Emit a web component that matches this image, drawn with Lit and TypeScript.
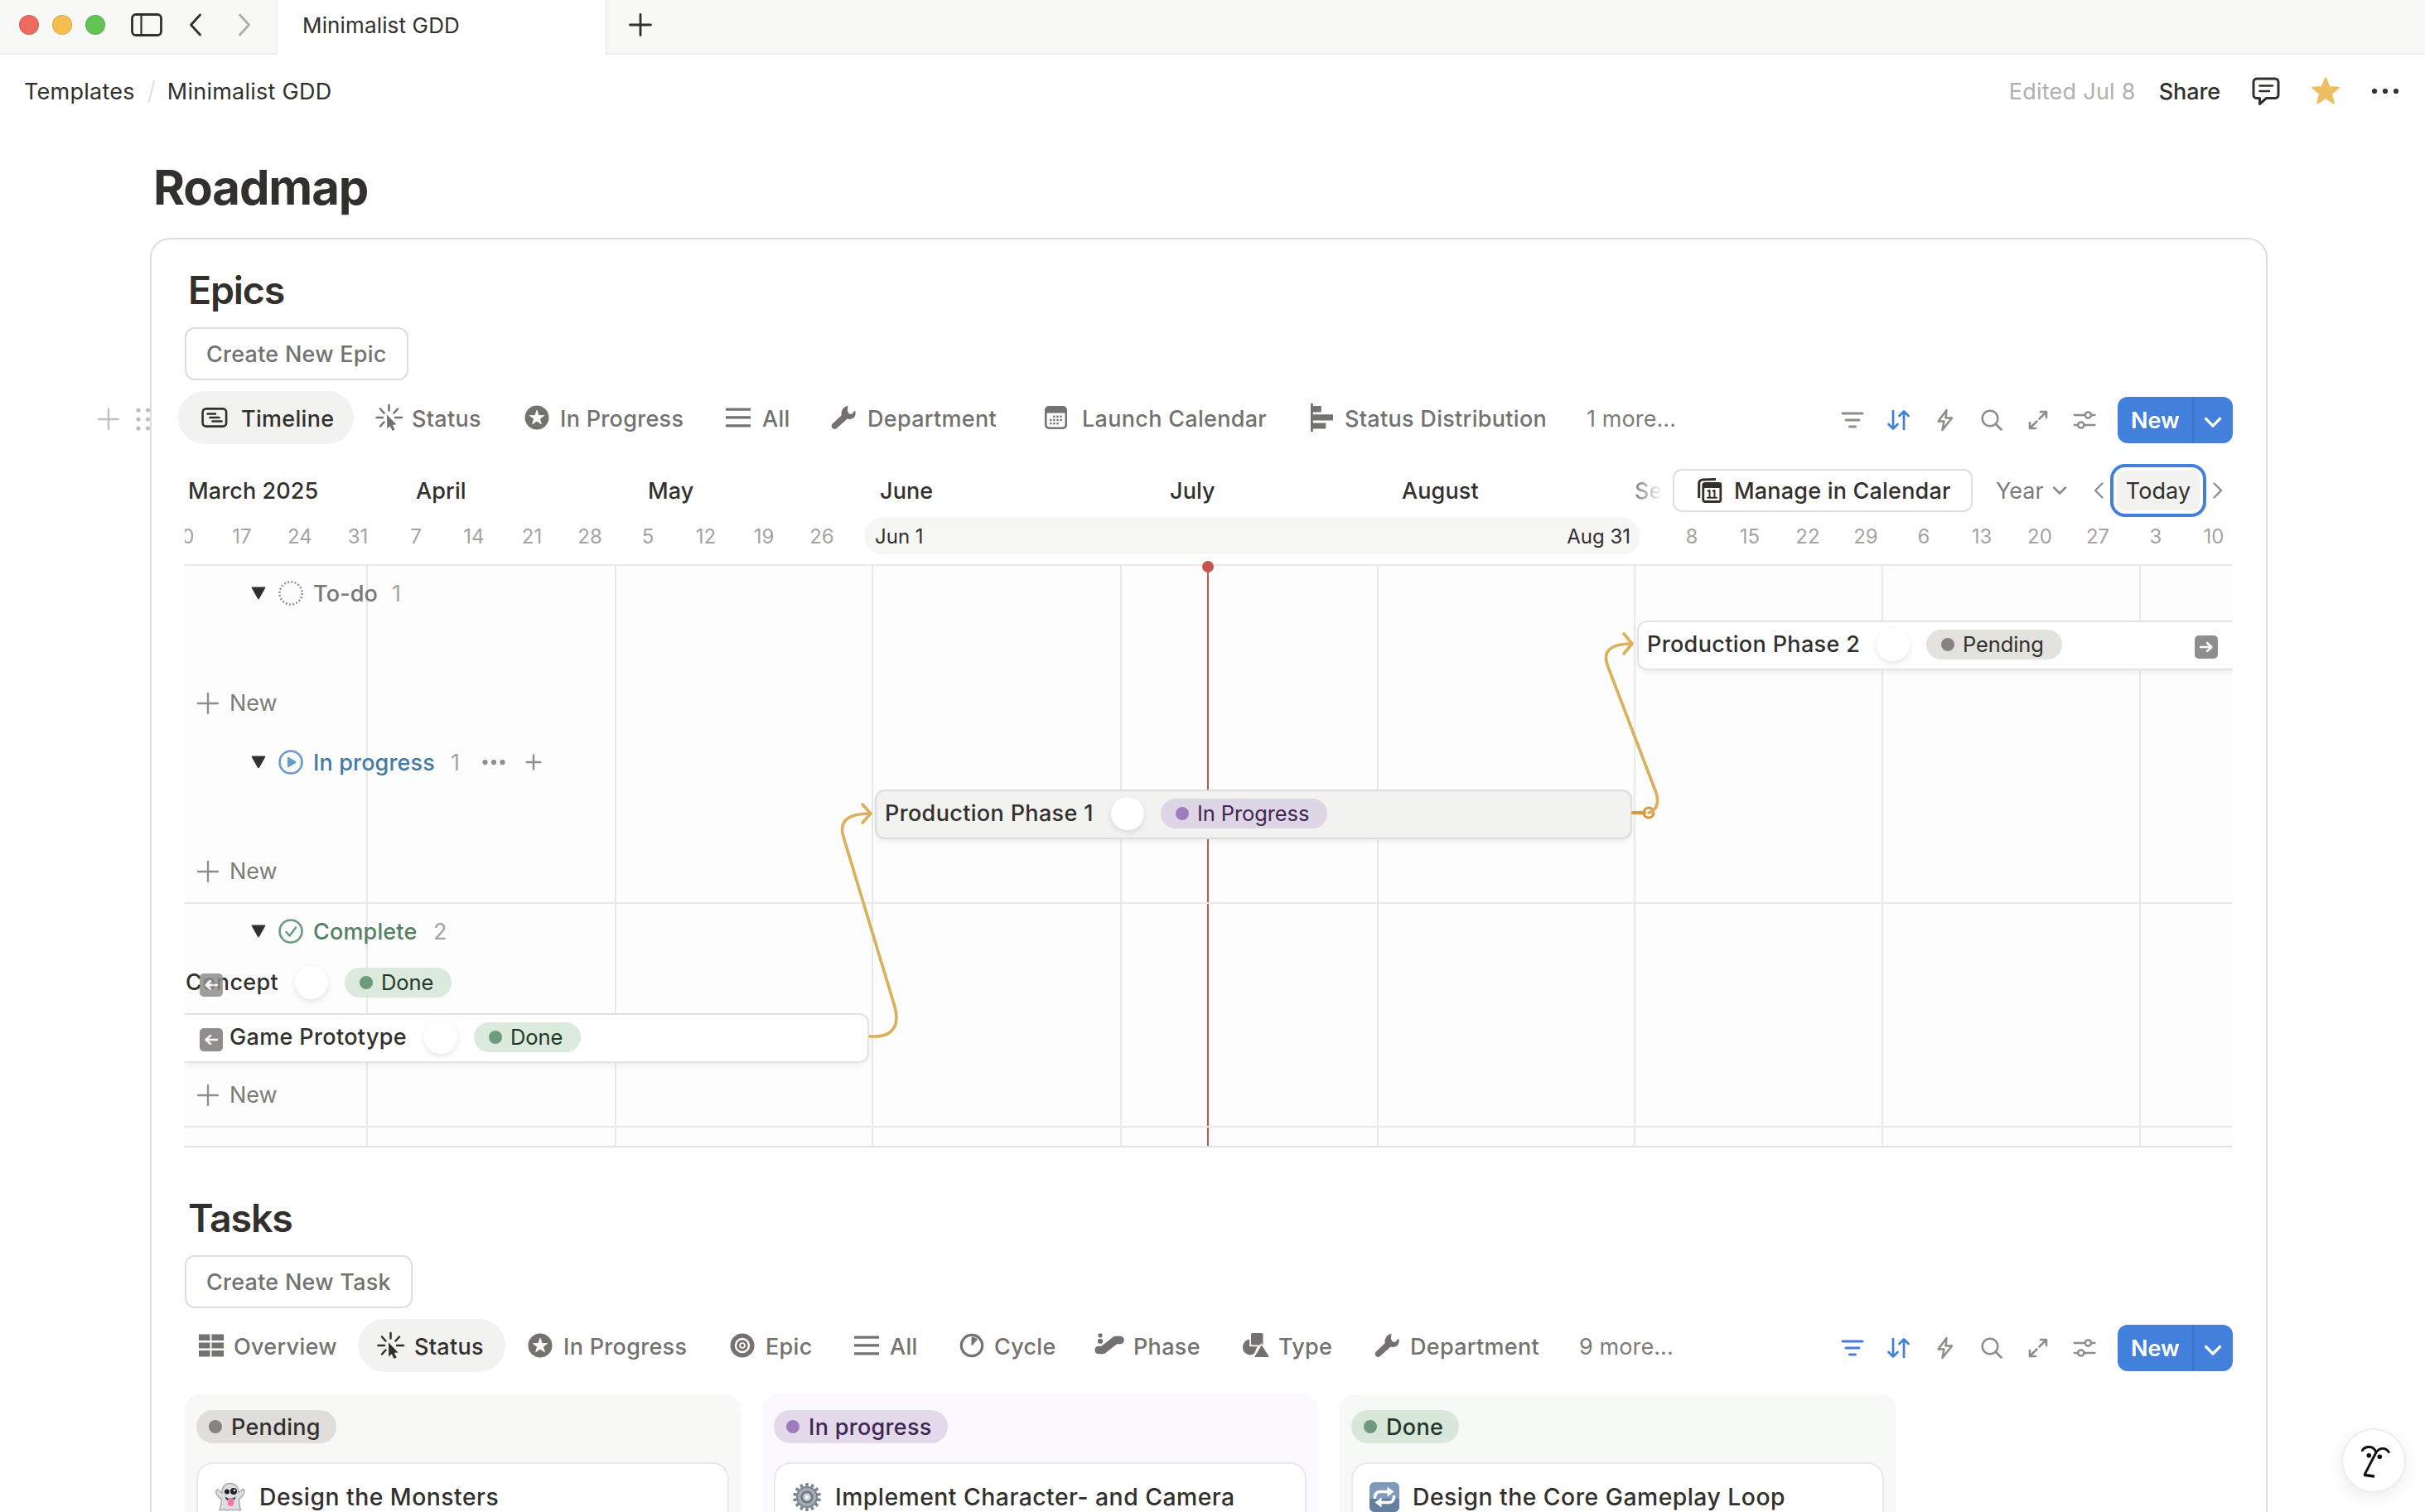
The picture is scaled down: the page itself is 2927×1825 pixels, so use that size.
import { LitElement, html, svg, css, nothing, TemplateResult } from "lit";
import { customElement, property } from "lit/decorators.js";
import { classMap } from "lit/directives/class-map.js";
import { styleMap } from "lit/directives/style-map.js";

type Glyph = { w: number; h: number; body: TemplateResult };

const star = (cx: number, cy: number, r: number, k = 0.42) => {
  const pts: string[] = [];
  for (let i = 0; i < 10; i++) {
    const a = -Math.PI / 2 + (i * Math.PI) / 5;
    const q = i % 2 ? r * k : r;
    pts.push(`${(cx + q * Math.cos(a)).toFixed(2)},${(cy + q * Math.sin(a)).toFixed(2)}`);
  }
  return pts.join(" ");
};

const line = (d: string, sw = 2.5) =>
  svg`<path d=${d} fill="none" stroke="currentColor" stroke-width=${sw} stroke-linecap="round" stroke-linejoin="round"/>`;

const teeth = (n: number, r: number) =>
  Array.from({ length: n }, (_, i) => svg`<rect x="16.2" y=${18 - r} width="3.6" height="6" rx="1" transform=${`rotate(${(i * 360) / n} 18 18)`}/>`);

const glyphs: Record<string, Glyph> = {
  sidebar: { w: 38, h: 28, body: svg`<rect x="1.5" y="1.5" width="35" height="25" rx="4.5" fill="none" stroke="currentColor" stroke-width="2.8"/><path d="M12.5 2v24" stroke="currentColor" stroke-width="2.2"/>` },
  back: { w: 16, h: 28, body: line("M13.5 2 2.5 14l11 12", 2.8) },
  forward: { w: 16, h: 28, body: line("M2.5 2l11 12-11 12", 2.8) },
  plusTop: { w: 28, h: 28, body: line("M14 1.5v25M1.5 14h25", 2.8) },
  comment: { w: 36, h: 36, body: svg`${line("M7 3h22a4 4 0 0 1 4 4v15.500a4 4 0 0 1-4 4H18.500l-8 7v-7H7a4 4 0 0 1-4-4V7a4 4 0 0 1 4-4z", 3)}${line("M10.500 11.500h15.500M10.500 18h11.500", 2.6)}` },
  starFill: { w: 36, h: 36, body: svg`<polygon points=${star(18, 19, 16.5, 0.43)} fill="#edbf62" stroke="#edbf62" stroke-width="2.4" stroke-linejoin="round"/>` },
  dots: { w: 34, h: 8, body: svg`<circle cx="4" cy="4" r="3.1"/><circle cx="17" cy="4" r="3.1"/><circle cx="30" cy="4" r="3.1"/>` },
  dotsSmall: { w: 28, h: 8, body: svg`<circle cx="3.500" cy="4" r="3.100"/><circle cx="14" cy="4" r="3.100"/><circle cx="24.500" cy="4" r="3.100"/>` },
  plus: { w: 28, h: 28, body: line("M14 2v24M2 14h24", 2.3) },
  plusSmall: { w: 24, h: 24, body: line("M12 3.500v17M3.500 12h17", 2.4) },
  grip: { w: 18, h: 30, body: svg`${[4, 15, 26].map((y) => svg`<circle cx="3" cy=${y} r="2.600"/><circle cx="14.500" cy=${y} r="2.600"/>`)}` },
  timeline: { w: 32, h: 26, body: svg`<rect x="1.600" y="2.400" width="28.500" height="21.200" rx="4" fill="none" stroke="currentColor" stroke-width="2.600"/>${line("M7.500 8.500h9.500M10.500 13h11M13.500 17.500h11", 2.6)}` },
  burst: { w: 34, h: 34, body: svg`${line("M16.500 2v6.500M1.500 17h7.500M24 17h8M6 6.500l4.500 5M27 6.500l-4.500 5M10.500 22.500l-4.500 5", 2.5)}<path d="M14 13.500l11.500 12-4.700.3 2.800 5.600-3 1.500-2.700-5.700-3.600 3.400z"/>` },
  starCircle: { w: 30, h: 30, body: svg`<circle cx="15" cy="15" r="14.500"/><polygon points=${star(15, 15.4, 9.2, 0.4)} fill="#fff" stroke="#fff" stroke-width=".8" stroke-linejoin="round"/>` },
  rows: { w: 30, h: 26, body: svg`<path d="M0 1.500h30v3.300H0zM0 11.300h30v3.300H0zM0 21.200h30v3.300H0z"/>` },
  wrench: { w: 30, h: 30, body: svg`<path d="M20.500.8l-.6 6.200 1.900 3.600 3.500.2 3.700-4.600c1.500 4.300.3 8-2.800 9.900-2.300 1.300-4.600 1.200-6.600.5L7.600 27.300c-1.400 1.800-3.900 2.200-5.600.8-1.700-1.500-1.700-4-.2-5.600L12.700 12.300c-1.100-5 2-10.400 7.800-11.500z"/>` },
  calendar: { w: 30, h: 30, body: svg`<path fill-rule="evenodd" d="M6 1h17a5 5 0 0 1 5 5v18a5 5 0 0 1-5 5H6a5 5 0 0 1-5-5V6a5 5 0 0 1 5-5zM3.500 9.500V23A3.500 3.500 0 0 0 7 26.500h15a3.500 3.500 0 0 0 3.500-3.500V9.500z"/>${[12.6, 16.8, 21].map((y, r) => [6.5, 10.6, 14.7, 18.8].map((x, c) => (r === 0 && c === 0) || (r === 2 && c === 3) ? nothing : svg`<rect x=${x + 0.6} y=${y} width="2.400" height="2.400"/>`))}` },
  bars: { w: 28, h: 34, body: svg`<path d="M0 0h2.800v34H0zM2.800 3h10v7.600h-10zM2.800 13.300H27v7.200H2.800zM2.800 23.400h15.500v7.200H2.800z"/>` },
  filter: { w: 28, h: 24, body: line("M2 4h24M6 12h16M10.500 20h7", 3) },
  sort: { w: 30, h: 26, body: line("M8 2v21.500M2.500 18l5.500 5.500 5.500-5.500M21 24V2.500M15.500 8 21 2.500 26.500 8", 2.7) },
  bolt: { w: 22, h: 28, body: line("M12.500 2 2.500 15.500h7L7.500 26l11.500-14.500h-7.500z", 2.5) },
  search: { w: 28, h: 28, body: svg`<circle cx="12" cy="12" r="9.300" fill="none" stroke="currentColor" stroke-width="2.600"/>${line("M19 19l6.500 6.500", 2.8)}` },
  expand: { w: 26, h: 26, body: line("M14.500 11.500 23 3M16 3h7v7M11.500 14.500 3 23M3 16v7h7", 2.6) },
  sliders: { w: 28, h: 24, body: svg`${line("M1.800 6h12.500M22.500 6h3.800M1.800 18h4M14 18h12.300", 2.6)}<circle cx="18.400" cy="6" r="3.600" fill="none" stroke="currentColor" stroke-width="2.500"/><circle cx="9.800" cy="18" r="3.600" fill="none" stroke="currentColor" stroke-width="2.500"/>` },
  chevWhite: { w: 24, h: 16, body: line("M3.500 3.500l8.500 8.500 8.500-8.500", 3.2) },
  chevDown: { w: 20, h: 14, body: line("M3 3.500l7 7 7-7", 2.5) },
  chevLeft: { w: 14, h: 22, body: line("M11.500 2.500 3 11l8.500 8.500", 2.4) },
  chevRight: { w: 14, h: 22, body: line("M2.500 2.500 11 11l-8.500 8.500", 2.4) },
  manage: { w: 30, h: 30, body: svg`<path d="M1.700 24V7c0-3 1.600-4.600 4.500-4.900L22 1.600" fill="none" stroke="currentColor" stroke-width="3"/><rect x="6.800" y="6.500" width="21" height="22" rx="2" fill="none" stroke="currentColor" stroke-width="2.800"/><path d="M6 6h23v6H6z"/>${line("M12.500 15.700l2-.8v8.700M12 23.800h5M18.500 15.700l2-.8v8.700M18 23.800h5", 2)}` },
  caret: { w: 18, h: 16, body: svg`<path d="M1.500 .500h15q1.400 0 .7 1.300l-7 12.500q-1.200 1.800-2.400 0L.8 1.800Q.1.500 1.500.500z"/>` },
  todo: { w: 30, h: 30, body: svg`<circle cx="15" cy="15" r="13.600" fill="none" stroke="#8c8b88" stroke-width="2.500" stroke-dasharray="1.900 2.370"/>` },
  play: { w: 30, h: 30, body: svg`<circle cx="15" cy="15" r="13.500" fill="none" stroke="#6a9bc8" stroke-width="2.600"/><path d="M11 9.200q0-1 1-.5l9.300 5.500q1 .8 0 1.500L12 21.200q-1 .4-1-.5z" fill="#6a9bc8"/>` },
  check: { w: 30, h: 30, body: svg`<circle cx="15" cy="15" r="13.500" fill="none" stroke="#6c9b7d" stroke-width="2.600"/><path d="M9.500 16l4 4.500 7.500-10" fill="none" stroke="#6c9b7d" stroke-width="2.500" stroke-linecap="round" stroke-linejoin="round"/>` },
  jumpLeft: { w: 28, h: 28, body: svg`<rect width="28" height="28" rx="5" fill="#8f8e8d"/><path d="M21 14H8M13 9l-5.500 5 5.500 5" fill="none" stroke="#fff" stroke-width="2.400" stroke-linecap="round" stroke-linejoin="round"/>` },
  jumpRight: { w: 28, h: 28, body: svg`<rect width="28" height="28" rx="5" fill="#8f8e8d"/><path d="M7 14h13M15 9l5.500 5-5.500 5" fill="none" stroke="#fff" stroke-width="2.400" stroke-linecap="round" stroke-linejoin="round"/>` },
  board: { w: 30, h: 28, body: svg`<path d="M0 .500h13.500v7.500H0zM15.500.500H30v7.500H15.500zM0 10.500h13.500v7H0zM15.500 10.500H30v7H15.500zM0 20h13.500v7.500H0zM15.500 20H30v7.500H15.500z"/>` },
  target: { w: 30, h: 30, body: svg`<circle cx="15" cy="15" r="14.500"/><circle cx="15" cy="15" r="8" fill="none" stroke="#fff" stroke-width="2.400"/><circle cx="15" cy="15" r="2.900" fill="none" stroke="#fff" stroke-width="1.800"/>` },
  cycle: { w: 30, h: 30, body: svg`<circle cx="15" cy="15" r="12.700" fill="none" stroke="currentColor" stroke-width="3.200"/><path d="M15 15V5a10.500 10.500 0 0 1 6.500 2.500z" stroke="currentColor" stroke-width="1" stroke-linejoin="round"/>` },
  phase: { w: 38, h: 30, body: svg`<path d="M5.200 20.500h5L25.500 8.500h5.500" fill="none" stroke="currentColor" stroke-width="9.600" stroke-linecap="round" stroke-linejoin="round"/><circle cx="7" cy="2.800" r="2.600"/><rect x="4" y="7" width="6" height="5.800" rx="2"/>` },
  shapes: { w: 34, h: 30, body: svg`<rect x="11" y="0" width="14.500" height="14.500" rx="1.500"/><path d="M9.200 7.500v8.800h9.500l-4 8.700A9 9 0 0 1 1 17 9.300 9.300 0 0 1 9.200 7.500z"/><path d="M23.500 15.500 32 28.500H16z" stroke="#fff" stroke-width="3.600"/><path d="M23.800 15.500 32 28.500H16z" stroke="currentColor" stroke-width="1.200" stroke-linejoin="round"/>` },
  ghost: { w: 38, h: 36, body: svg`<path d="M19 1.500c7 0 10 5 10 11 2-1 3.500-3.500 5-4 2.500 0 2.500 3 1 6-1.500 3-4 5-5.500 6 0 5 .5 9 2 13-3 1.500-5-1-6.500-.5-2.500 1.500-4 1.500-6 0-2.500 1.500-4.500 1.500-6.500 0-2 0-3.500 1.500-6.500.5C7.500 29.500 8.500 26 8.500 20.500 6 19.500 4 17.500 2.800 15c-1.500-3-1.500-6 .7-6 2 .5 3.500 3 5.500 4 0-6.500 3-11.500 10-11.500z" fill="#dedee1" stroke="#a9a8ad" stroke-width="1.400"/><ellipse cx="15" cy="11.500" rx="3" ry="3" fill="#222"/><ellipse cx="23" cy="11" rx="4" ry="4" fill="#222"/><circle cx="24" cy="10" r="1.200" fill="#fff"/><path d="M12.500 17.500q7 4.500 13 0-.5 5-6.500 5-5.500 0-6.500-5z" fill="#333"/><path d="M16 20h7v5.500a3.500 3.500 0 0 1-7 0z" fill="#f277a5"/>` },
  gear: { w: 36, h: 36, body: svg`<g fill="#7c8690">${teeth(14, 17)}</g><circle cx="18" cy="18" r="13" fill="#a3abb4"/><circle cx="18" cy="18" r="12" fill="none" stroke="#737d87" stroke-width="1.500"/><circle cx="18" cy="18" r="7.500" fill="#6d7680"/><circle cx="18" cy="18" r="5" fill="#c3c9cf"/><circle cx="18" cy="18" r="2.200" fill="#fff"/>` },
  repeat: { w: 36, h: 36, body: svg`<rect width="36" height="36" rx="6" fill="#7f9abb"/><path d="M0 20h36v10a6 6 0 0 1-6 6H6a6 6 0 0 1-6-6z" fill="#667f9f"/><path d="M6.500 20v-2.500a6 6 0 0 1 6-6H24M29.500 16v2.500a6 6 0 0 1-6 6H12" fill="none" stroke="#fff" stroke-width="3.600"/><path d="M21.500 5.500l8 6-8 6zM14.500 18.500l-8 6 8 6z" fill="#fff"/>` },
  face: { w: 74, h: 74, body: svg`<g fill="none" stroke="#111" stroke-width="2.900" stroke-linecap="round"><path d="M23.300 24.700c3-5 12.500-6.500 16 .800"/><path d="M26.300 53.500 39.500 28c4-7 12-7.500 15.700-1.300" stroke-linejoin="round"/></g><path d="M25.500 54.300l12.500 1.700" stroke="#111" stroke-width="3.600"/><circle cx="31.300" cy="30.700" r="2.800" fill="#111"/><circle cx="44.300" cy="32.300" r="2.800" fill="#111"/>` },
};

const icon = (name: string, cls = "") => {
  const g = glyphs[name];
  return html`<svg class="ico ${cls}" width=${g.w} height=${g.h} viewBox="0 0 ${g.w} ${g.h}" fill="currentColor">${g.body}</svg>`;
};

const base = css`
  :host { font-family: Inter, "Liberation Sans", sans-serif; color: #32302c; }
  * { box-sizing: border-box; }
  .ico { display: block; flex: none; overflow: visible; }
`;

type Tab = { label: string; icon: string; width: number; slot: number; pad?: number };

@customElement("view-bar")
class ViewBar extends LitElement {
  @property({ attribute: false }) tabs: Tab[] = [];
  @property() active = "";
  @property() more = "";
  @property({ type: Boolean }) filtered = false;

  static styles = [base, css`
    :host { display: block; }
    .bar { display: flex; height: 64px; margin-left: -8px; }
    .tab { display: flex; align-items: center; height: 64px; border-radius: 32px; flex: none; color: #73726e; font-size: 27px; font-weight: 500; letter-spacing: .3px; white-space: nowrap; }
    .tab.active { background: #f2f2f1; color: #32302c; }
    .slot { flex: none; }
    .label { padding-top: 4px; line-height: 40px; }
    .more { padding-left: 26px; font-size: 27px; line-height: 40px; padding-top: 14px; color: #7d7c78; letter-spacing: .1px; }
    .tools { margin-left: auto; margin-top: 7px; height: 56px; display: flex; align-items: center; color: #8e8d8a; }
    .tool { width: 56px; display: grid; place-items: center; }
    .tool.on { color: #4280db; }
    .new { margin-left: 12px; width: 139px; height: 56px; border-radius: 12px; background: #4280db; color: #fff; display: flex; align-items: center; font-size: 27px; font-weight: 600; }
    .new .text { width: 92px; height: 56px; line-height: 57px; padding-left: 16px; border-right: 2px solid #3b74c6; }
    .new .drop { flex: 1; display: grid; place-items: center; padding: 5px 2px 0 0; }
  `];

  render() {
    const tools: [string, boolean][] = [["filter", this.filtered], ["sort", true], ["bolt", false], ["search", false], ["expand", false], ["sliders", false]];
    return html`<div class="bar">
      ${this.tabs.map((t) => html`<div class=${classMap({ tab: true, active: t.label === this.active })} style=${styleMap({ width: `${t.width}px`, paddingLeft: `${t.pad ?? 26}px` })}>
        <span class="slot" style=${styleMap({ width: `${t.slot}px` })}>${icon(t.icon)}</span><span class="label">${t.label}</span></div>`)}
      <div class="more">${this.more}</div>
      <div class="tools">
        ${tools.map(([n, on]) => html`<span class=${classMap({ tool: true, on })}>${icon(n)}</span>`)}
        <div class="new"><span class="text">New</span><span class="drop">${icon("chevWhite")}</span></div>
      </div>
    </div>`;
  }
}

@customElement("status-pill")
class StatusPill extends LitElement {
  @property() label = "";
  @property() tone = "gray";
  @property({ type: Boolean }) large = false;

  static styles = [base, css`
    :host { display: block; flex: none; }
    .pill { display: flex; align-items: center; height: 36px; border-radius: 18px; padding: 0 22px 0 18px; gap: 10px; font-size: 25.5px; font-weight: 400; letter-spacing: -0.1px; white-space: nowrap; }
    .dot { width: 16px; height: 16px; border-radius: 50%; flex: none; }
    .large { height: 40px; border-radius: 20px; padding: 0 19px 0 15px; gap: 11px; font-size: 27px; font-weight: 500; letter-spacing: .3px; }
    .gray { background: #e3e2de; color: #32302c; }
    .large.gray { background: #dfdeda; }
    .gray .dot { background: #858481; }
    .purple { background: #ded5e5; color: #402653; }
    .large.purple { background: #e2d9ea; }
    .purple .dot { background: #9d7dbe; }
    .green { background: #dce9dd; color: #1f3829; }
    .large.green { background: #d9e7da; }
    .green .dot { background: #6c9b7d; }
  `];

  render() {
    return html`<div class="pill ${this.tone} ${this.large ? "large" : ""}"><span class="dot"></span><span>${this.label}</span></div>`;
  }
}

@customElement("epic-timeline")
class EpicTimeline extends LitElement {
  static styles = [base, css`
    :host { display: block; margin-top: 24px; }
    .head { display: flex; align-items: center; height: 64px; color: #32302c; font-size: 27px; font-weight: 500; }
    .months { width: 1782px; flex: none; display: flex; overflow: hidden; padding-left: 4px; line-height: 41px; white-space: nowrap; letter-spacing: .1px; }
    .month { flex: none; }
    .fade { background: linear-gradient(90deg, #82817e, #fff 34px); -webkit-background-clip: text; background-clip: text; color: transparent; }
    .manage { margin-left: 14px; width: 362px; height: 52px; border: 2px solid #dededc; border-radius: 11px; display: flex; align-items: center; padding-left: 28px; gap: 14px; flex: none; letter-spacing: .2px; white-space: nowrap; }
    .year { margin-left: 28px; display: flex; align-items: center; gap: 9px; width: 117px; font-weight: 400; color: #7d7c78; }
    .muted { color: #8e8d8a; }
    .today { margin: 0 7px 0 7px; width: 116px; height: 64px; border: 4px solid #4280db; border-radius: 18px; padding: 4px; flex: none; }
    .today .fill { height: 48px; border-radius: 9px; background: #f2f2f1; line-height: 49px; text-align: center; font-weight: 400; letter-spacing: .1px; }
    .days { display: flex; height: 44px; margin-top: 1px; overflow: hidden; line-height: 46px; font-size: 24px; color: #a5a4a1; }
    .day { width: 70px; flex: none; text-align: center; }
    .first { margin-left: -36px; }
    .range { flex: none; width: 935px; margin: 0 28px 0 17px; border-radius: 20px; background: #f6f6f5; color: #32302c; display: flex; justify-content: space-between; padding: 0 11px 0 12px; }
    .canvas { position: relative; margin-top: 12px; border-top: 2px solid #e9e9e8; background: #fdfdfd; height: 704px; overflow: hidden; }
    .grid { position: absolute; inset: 0; }
    .vline { position: absolute; top: 0; bottom: 0; width: 2px; background: #e9e9e8; }
    .now { position: absolute; top: 0; bottom: 0; width: 2px; left: 1234px; background: #c7554c; }
    .rows { position: relative; }
    .group { height: 66px; display: flex; align-items: center; padding-left: 80px; font-size: 27px; font-weight: 500; letter-spacing: .15px; }
    .group .g-icon { margin: 0 12px 0 15px; }
    .count { font-weight: 400; color: #a5a4a1; }
    .todo .name { color: #787774; width: 95px; }
    .progress .name { color: #447aa6; width: 166px; }
    .complete .name { color: #548164; width: 145px; }
    .extra { color: #8e8d8a; display: flex; align-items: center; gap: 22px; margin-left: 27px; }
    .add { height: 78px; display: flex; align-items: center; gap: 12px; padding: 1px 0 0 14px; font-size: 27px; color: #7d7c78; }
    .add .ico { color: #8e8d8a; }
    .add.ruled { border-bottom: 2px solid #e9e9e8; }
    .bar { height: 60px; display: flex; align-items: center; padding-bottom: 3px; border: 2px solid #e3e3e1; border-radius: 12px; background: #fff; box-shadow: 0 3px 6px rgba(0,0,0,.06); font-size: 27px; font-weight: 500; letter-spacing: .35px; white-space: nowrap; }
    .bar.hover { background: #f2f2f1; border-color: #dcdcda; }
    .bar.bare { background: none; border-color: transparent; box-shadow: none; margin-bottom: 6px; }
    .bar.from { border-left: 0; border-top-left-radius: 0; border-bottom-left-radius: 0; }
    .bar.to { border-right: 0; border-top-right-radius: 0; border-bottom-right-radius: 0; }
    .title { flex: none; }
    .avatar { width: 40px; height: 40px; border-radius: 50%; background: #fff; box-shadow: 0 3px 7px rgba(0,0,0,.1); flex: none; margin-right: 20px; }
    .jump-r { margin: 7px 18px 0 auto; }
    .jump-l { margin: 7px 8px 0 18px; }
    .jump-over { position: absolute; left: 18px; top: 492px; opacity: .85; }
    .links { position: absolute; left: 0; top: 0; }
    .foot { height: 24px; border-bottom: 2px solid #e3e3e1; }
  `];

  private day = (d: string, i = 1) => html`<span class="day ${i === 0 ? "first" : ""}">${d}</span>`;

  render() {
    const months: [string, number][] = [["March 2025", 275], ["April", 280], ["May", 280], ["June", 350], ["July", 280], ["August", 281]];
    const before = ["10", "17", "24", "31", "7", "14", "21", "28", "5", "12", "19", "26"];
    const after = ["8", "15", "22", "29", "6", "13", "20", "27", "3", "10"];
    const lines = [220, 520, 830, 1130, 1440, 1750, 2049, 2360];
    const group = (cls: string, glyph: string, name: string, n: number, extra: unknown = nothing) =>
      html`<div class="group ${cls}">${icon("caret")}${icon(glyph, "g-icon")}<span class="name">${name}</span><span class="count">${n}</span>${extra}</div>`;
    const add = (ruled = false) => html`<div class="add ${ruled ? "ruled" : ""}">${icon("plus")}<span>New</span></div>`;
    const box = (left: number, width: number, pad: number) => styleMap({ marginLeft: `${left}px`, width: `${width}px`, paddingLeft: `${pad}px` });
    const title = (t: string, w: number) => html`<span class="title" style=${styleMap({ width: `${w}px` })}>${t}</span><span class="avatar"></span>`;

    return html`
      <div class="head">
        <div class="months">${months.map(([m, w]) => html`<span class="month" style=${styleMap({ width: `${w}px` })}>${m}</span>`)}<span class="month fade">Se</span></div>
        <div class="manage">${icon("manage")}<span>Manage in Calendar</span></div>
        <div class="year"><span>Year</span>${icon("chevDown", "muted")}</div>
        ${icon("chevLeft", "muted")}
        <div class="today"><div class="fill">Today</div></div>
        ${icon("chevRight", "muted")}
      </div>
      <div class="days">
        ${before.map((d, i) => this.day(d, i))}
        <div class="range"><span>Jun 1</span><span>Aug 31</span></div>
        ${after.map((d) => this.day(d))}
      </div>
      <div class="canvas">
        <div class="grid">${lines.map((x) => html`<div class="vline" style=${styleMap({ left: `${x - 1}px` })}></div>`)}<div class="now"></div></div>
        <div class="rows">
          ${group("todo", "todo", "To-do", 1)}
          <div class="bar to" style=${box(1753, 719, 10)}>${title("Production Phase 2", 277)}<status-pill label="Pending"></status-pill>${icon("jumpRight", "jump-r")}</div>
          ${add()}
          ${group("progress", "play", "In progress", 1, html`<span class="extra">${icon("dotsSmall")}${icon("plusSmall")}</span>`)}
          <div class="bar hover" style=${box(833, 914, 10)}>${title("Production Phase 1", 273)}<status-pill label="In Progress" tone="purple"></status-pill></div>
          ${add(true)}
          ${group("complete", "check", "Complete", 2)}
          <div class="bar bare from" style=${box(0, 600, 1)}>${title("Concept", 132)}<status-pill label="Done" tone="green"></status-pill></div>
          <div class="bar from" style=${box(0, 826, 0)}>${icon("jumpLeft", "jump-l")}${title("Game Prototype", 235)}<status-pill label="Done" tone="green"></status-pill></div>
          ${add(true)}
          <div class="foot"></div>
        </div>
        ${icon("jumpLeft", "jump-over")}
        <svg class="links" width="2472" height="702" viewBox="0 0 2472 702" fill="none" stroke="#dab05a" stroke-width="3.600" stroke-linecap="round" stroke-linejoin="round">
          <path d="M827 568h6c22 0 30-14 24-36L795 327c-6-20 7-28 31-28M818 288l10 11-10 11"/>
          <path d="M1748 298h14" stroke="#d59b3a" stroke-width="4"/><circle cx="1767" cy="298" r="6" stroke="#d59b3a" stroke-width="3"/>
          <path d="M1767 298c9-2 13-12 9-24L1718 122c-8-20 4-28 28-28M1737 82l10 12-10 12"/>
        </svg>
      </div>`;
  }
}

@customElement("app-root")
class AppRoot extends LitElement {
  static styles = [base, css`
    :host { display: block; width: 2927px; height: 1825px; overflow: hidden; background: #fff; position: relative; }
    .chrome { display: flex; align-items: stretch; height: 66px; background: #f8f8f7; border-bottom: 2px solid #ededec; }
    .controls { width: 335px; border-right: 2px solid #ededec; display: flex; align-items: center; padding: 0 0 4px 23px; flex: none; }
    .light { width: 24px; height: 24px; border-radius: 50%; margin-right: 16px; border: 1px solid rgba(0,0,0,.1); }
    .red { background: #ec6a5e; } .amber { background: #f4bf4f; } .lime { background: #61c554; margin-right: 31px; }
    .go-back { margin-left: 32px; } .go-fwd { margin-left: 43px; color: #aeadab; }
    .doc-tab { width: 396px; height: 66px; background: #fff; padding: 11px 0 0 30px; line-height: 40px; font-size: 26px; font-weight: 400; letter-spacing: .15px; flex: none; }
    .new-tab { border-left: 2px solid #ededec; padding: 16px 0 0 26px; flex: 1; }
    .header { height: 88px; display: flex; align-items: center; padding: 0 31px 0 29px; font-size: 27px; letter-spacing: .25px; }
    .slash { margin: 0 14px 0 15px; }
    .right { margin-left: auto; display: flex; align-items: center; }
    .edited { color: #b0afad; margin-right: 28px; } .share { font-weight: 500; margin-right: 37px; letter-spacing: -.1px; }
    .star-btn { margin: 0 37px 0 36px; }
    .page-title { margin: 31px 0 0 185px; height: 84px; line-height: 83px; font-size: 58px; font-weight: 700; letter-spacing: -1.1px; }
    .panel { margin: 18px 0 0 181px; width: 2556px; height: 1600px; border: 2px solid #dededc; border-radius: 24px; padding: 31px 40px 0; }
    .section { height: 60px; line-height: 61px; padding-left: 4px; font-size: 46.5px; font-weight: 600; letter-spacing: -1.2px; }
    .section.tasks { margin-top: 55px; }
    .create { display: flex; width: fit-content; height: 64px; margin-top: 15px; border: 2px solid #dededc; border-radius: 12px; padding: 0 24px; line-height: 62px; font-size: 27px; font-weight: 500; letter-spacing: .25px; color: #73726e; white-space: nowrap; }
    .views { display: block; margin-top: 13px; }
    .columns { display: flex; gap: 26px; margin-top: 27px; }
    .column { width: 671px; height: 300px; border-radius: 18px; padding: 19px 14px; display: flex; flex-direction: column; align-items: flex-start; }
    .gray { background: #f8f8f6; } .purple { background: #fbf9fe; } .green { background: #f6f9f6; }
    .card { margin-top: 23px; width: 643px; height: 200px; border: 2px solid #e9e9e8; border-radius: 20px; background: #fff; padding: 20px 0 0 20px; display: flex; gap: 16px; font-size: 28.3px; font-weight: 500; letter-spacing: .5px; line-height: 40px; white-space: nowrap; }
    .card .ico { margin-top: 2px; }
    .handles { position: absolute; left: 117px; top: 491px; width: 64px; overflow: hidden; display: flex; align-items: center; gap: 19px; color: #bfbebb; }
    .assistant { position: absolute; left: 2828px; top: 1726px; width: 74px; height: 74px; border-radius: 50%; background: #fff; box-shadow: 0 0 0 2px #ededec, 0 6px 22px rgba(0,0,0,.09); }
    .now-knob { position: absolute; left: 1451px; top: 677px; width: 14px; height: 14px; border-radius: 50%; background: #c7554c; }
  `];

  private epicTabs: Tab[] = [
    { label: "Timeline", icon: "timeline", width: 212, slot: 48, pad: 28 },
    { label: "Status", icon: "burst", width: 180, slot: 44 },
    { label: "In Progress", icon: "starCircle", width: 243, slot: 43 },
    { label: "All", icon: "rows", width: 127, slot: 44 },
    { label: "Department", icon: "wrench", width: 257, slot: 44 },
    { label: "Launch Calendar", icon: "calendar", width: 322, slot: 46 },
    { label: "Status Distribution", icon: "bars", width: 333, slot: 41 },
  ];

  private taskTabs: Tab[] = [
    { label: "Overview", icon: "board", width: 217, slot: 42, pad: 25 },
    { label: "Status", icon: "burst", width: 178, slot: 45, pad: 23 },
    { label: "In Progress", icon: "starCircle", width: 244, slot: 43, pad: 27 },
    { label: "Epic", icon: "target", width: 150, slot: 43, pad: 27 },
    { label: "All", icon: "rows", width: 128, slot: 43, pad: 27 },
    { label: "Cycle", icon: "cycle", width: 164, slot: 42, pad: 26 },
    { label: "Phase", icon: "phase", width: 178, slot: 47, pad: 25 },
    { label: "Type", icon: "shapes", width: 159, slot: 44, pad: 25 },
    { label: "Department", icon: "wrench", width: 247, slot: 43 },
  ];

  render() {
    const columns = [
      { tone: "gray", status: "Pending", icon: "ghost", card: "Design the Monsters" },
      { tone: "purple", status: "In progress", icon: "gear", card: "Implement Character- and Camera" },
      { tone: "green", status: "Done", icon: "repeat", card: "Design the Core Gameplay Loop" },
    ];
    return html`
      <div class="chrome">
        <div class="controls">
          <span class="light red"></span><span class="light amber"></span><span class="light lime"></span>
          ${icon("sidebar")}${icon("back", "go-back")}${icon("forward", "go-fwd")}
        </div>
        <div class="doc-tab">Minimalist GDD</div>
        <div class="new-tab">${icon("plusTop")}</div>
      </div>
      <div class="header">
        <span>Templates</span>
        <svg class="ico slash" width="10" height="30" viewBox="0 0 10 30"><path d="M8.500 1 1.500 29" stroke="#e0e0de" stroke-width="2"/></svg>
        <span>Minimalist GDD</span>
        <div class="right">
          <span class="edited">Edited Jul 8</span><span class="share">Share</span>
          ${icon("comment")}${icon("starFill", "star-btn")}${icon("dots")}
        </div>
      </div>
      <div class="page-title">Roadmap</div>
      <div class="panel">
        <div class="section">Epics</div>
        <div class="create">Create New Epic</div>
        <view-bar class="views" .tabs=${this.epicTabs} active="Timeline" more="1 more..."></view-bar>
        <epic-timeline></epic-timeline>
        <div class="section tasks">Tasks</div>
        <div class="create">Create New Task</div>
        <view-bar class="views" .tabs=${this.taskTabs} active="Status" more="9 more..." filtered></view-bar>
        <div class="columns">
          ${columns.map((c) => html`<div class="column ${c.tone}">
            <status-pill large label=${c.status} tone=${c.tone}></status-pill>
            <div class="card">${icon(c.icon)}<span>${c.card}</span></div>
          </div>`)}
        </div>
      </div>
      <div class="handles">${icon("plus")}${icon("grip")}</div>
      <div class="now-knob"></div>
      <div class="assistant">${icon("face")}</div>
    `;
  }
}
